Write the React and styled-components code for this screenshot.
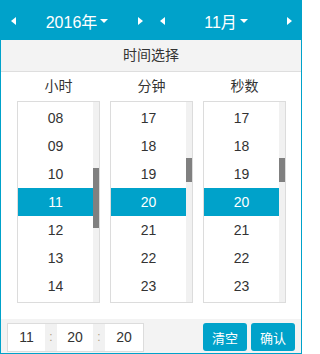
import React from 'react'
import styled, { createGlobalStyle } from 'styled-components'

const GlobalStyle = createGlobalStyle`
  html, body {
    margin: 0;
    padding: 0;
    background: #fff;
  }
  body {
    font-family: "Liberation Sans", Arial, "Noto Sans CJK SC", sans-serif;
    color: #333;
  }
`

const ROW = 28
const VIEW = 200
const VISIBLE = 7

const Picker = styled.div`
  width: 302px;
  height: 354px;
  box-sizing: border-box;
  border: 1px solid #00a2ca;
  display: flex;
  flex-direction: column;
  background: #fff;
`

const Header = styled.div`
  height: 39px;
  background: #00a2ca;
  display: flex;
`

const HeaderHalf = styled.div`
  flex: 1;
  display: flex;
  align-items: center;
  justify-content: space-between;
  padding: 0 ${p => p.$right}px 0 ${p => p.$left}px;
`

const Arrow = styled.span`
  width: 0;
  height: 0;
  border-top: 4.5px solid transparent;
  border-bottom: 4.5px solid transparent;
  ${p => (p.$dir === 'left'
    ? 'border-right: 5px solid #fff;'
    : 'border-left: 5px solid #fff;')}
  cursor: pointer;
`

const HeaderLabel = styled.div`
  display: flex;
  align-items: center;
  color: #fff;
  font-size: 16px;
  cursor: pointer;
`

const Caret = styled.span`
  margin-left: 3px;
  margin-top: 1px;
  width: 0;
  height: 0;
  border-left: 4px solid transparent;
  border-right: 4px solid transparent;
  border-top: 4px solid #fff;
`

const Title = styled.div`
  height: 31px;
  line-height: 31px;
  background: #f3f3f3;
  border-bottom: 1px solid #dedede;
  text-align: center;
  font-size: 14px;
  color: #333;
`

const Columns = styled.div`
  display: flex;
  gap: 10px;
  padding: 0 15px 0 16px;
  margin-bottom: 16px;
`

const Column = styled.div`
  width: 83px;
  display: flex;
  flex-direction: column;
`

const ColumnLabel = styled.div`
  height: 29px;
  line-height: 29px;
  text-align: center;
  font-size: 14px;
  color: #333;
`

const ListBox = styled.div`
  height: ${VIEW}px;
  border: 1px solid #dcdcdc;
  display: flex;
  overflow: hidden;
`

const ListView = styled.div`
  flex: 1;
  padding-top: 2px;
`

const Option = styled.div`
  height: ${ROW}px;
  line-height: ${ROW}px;
  text-align: center;
  font-size: 14px;
  color: ${p => (p.$active ? '#fff' : '#333')};
  background: ${p => (p.$active ? '#00a2ca' : 'transparent')};
  cursor: pointer;
`

const Track = styled.div`
  width: 6px;
  background: #f1f1f1;
  position: relative;
`

const Thumb = styled.div`
  position: absolute;
  left: 0;
  width: 6px;
  background: #808080;
`

const Footer = styled.div`
  height: 34px;
  box-sizing: border-box;
  background: #f3f3f3;
  display: flex;
  align-items: flex-start;
  justify-content: space-between;
  padding: 4px 6px 0 6px;
`

const TimeInputs = styled.div`
  display: flex;
  height: 27px;
  border: 1px solid #dcdcdc;
  background: #fff;
`

const Field = styled.div`
  width: ${p => p.$w}px;
  text-align: center;
  line-height: 27px;
  font-size: 14px;
  color: #333;
`

const Sep = styled.div`
  width: 12px;
  background: #f1f1f1;
  text-align: center;
  line-height: 26px;
  font-size: 12px;
  color: #b0a080;
`

const Buttons = styled.div`
  display: flex;
  gap: 4px;
`

const Button = styled.button`
  width: 44px;
  height: 28px;
  border: none;
  border-radius: 3px;
  background: #00a2ca;
  color: #fff;
  font-size: 13px;
  font-family: "Liberation Sans", Arial, "Noto Sans CJK SC", sans-serif;
  padding: 0;
  cursor: pointer;
`

const pad = n => String(n).padStart(2, '0')

// only the rows in view are drawn; the scrollbar shows where they sit in the full list
function TimeList({ label, count, value, top }) {
  const total = count * ROW
  const offset = top * ROW - 2
  const thumbH = (VIEW / total) * VIEW
  const thumbTop = (offset / total) * VIEW
  const rows = []
  for (let i = top; i < Math.min(count, top + VISIBLE); i++) rows.push(i)

  return (
    <Column>
      <ColumnLabel>{label}</ColumnLabel>
      <ListBox>
        <ListView>
          {rows.map(i => (
            <Option key={i} $active={i === value}>{pad(i)}</Option>
          ))}
        </ListView>
        <Track>
          <Thumb style={{ top: thumbTop, height: thumbH }} />
        </Track>
      </ListBox>
    </Column>
  )
}

export default function App() {
  return (
    <>
      <GlobalStyle />
      <Picker>
        <Header>
          <HeaderHalf $left={10} $right={8}>
            <Arrow $dir="left" />
            <HeaderLabel>2016年<Caret /></HeaderLabel>
            <Arrow $dir="right" />
          </HeaderHalf>
          <HeaderHalf $left={9} $right={9}>
            <Arrow $dir="left" />
            <HeaderLabel>11月<Caret /></HeaderLabel>
            <Arrow $dir="right" />
          </HeaderHalf>
        </Header>
        <Title>时间选择</Title>
        <Columns>
          <TimeList label="小时" count={24} value={11} top={8} />
          <TimeList label="分钟" count={60} value={20} top={17} />
          <TimeList label="秒数" count={60} value={20} top={17} />
        </Columns>
        <Footer>
          <TimeInputs>
            <Field $w={37}>11</Field>
            <Sep>:</Sep>
            <Field $w={36}>20</Field>
            <Sep>:</Sep>
            <Field $w={38}>20</Field>
          </TimeInputs>
          <Buttons>
            <Button>清空</Button>
            <Button>确认</Button>
          </Buttons>
        </Footer>
      </Picker>
    </>
  )
}
